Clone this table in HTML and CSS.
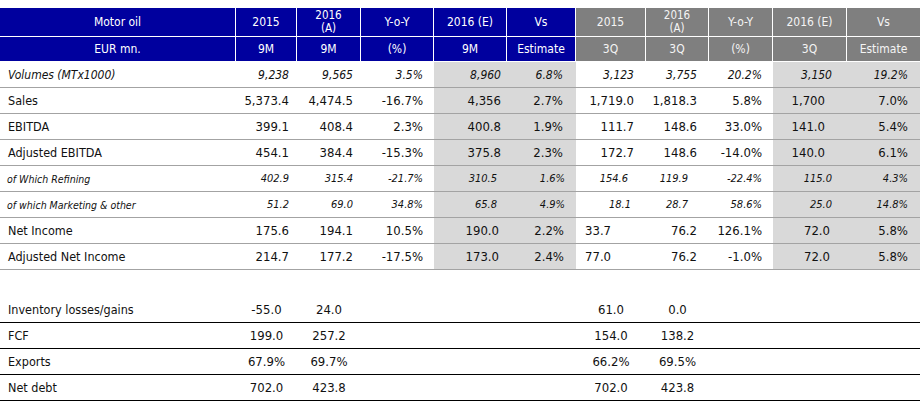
FILE: index.html
```html
<!DOCTYPE html>
<html>
<head>
<meta charset="utf-8">
<link rel="stylesheet" href="styles.css">
</head>
<body>
<table class="grid main">
  <colgroup>
    <col class="w1"><col class="w2"><col class="w3"><col class="w4"><col class="w5"><col class="w6"><col class="w7"><col class="w8"><col class="w9"><col class="w10"><col class="w11">
  </colgroup>
  <thead>
    <tr class="h1">
      <th class="blue">Motor oil</th>
      <th class="blue">2015</th>
      <th class="blue two">2016<br>(A)</th>
      <th class="blue">Y-o-Y</th>
      <th class="blue">2016 (E)</th>
      <th class="blue">Vs</th>
      <th class="grey">2015</th>
      <th class="grey two">2016<br>(A)</th>
      <th class="grey">Y-o-Y</th>
      <th class="grey">2016 (E)</th>
      <th class="grey">Vs</th>
    </tr>
    <tr class="h2">
      <th class="blue">EUR mn.</th>
      <th class="blue">9M</th>
      <th class="blue">9M</th>
      <th class="blue">(%)</th>
      <th class="blue">9M</th>
      <th class="blue">Estimate</th>
      <th class="grey">3Q</th>
      <th class="grey">3Q</th>
      <th class="grey">(%)</th>
      <th class="grey">3Q</th>
      <th class="grey">Estimate</th>
    </tr>
  </thead>
  <tbody class="data">
    <tr class="vol">
      <td>Volumes (MTx1000)</td><td>9,238</td><td>9,565</td><td>3.5%</td><td>8,960</td><td>6.8%</td><td>3,123</td><td>3,755</td><td>20.2%</td><td>3,150</td><td>19.2%</td>
    </tr>
    <tr>
      <td>Sales</td><td>5,373.4</td><td>4,474.5</td><td>-16.7%</td><td>4,356</td><td>2.7%</td><td>1,719.0</td><td>1,818.3</td><td>5.8%</td><td>1,700</td><td>7.0%</td>
    </tr>
    <tr>
      <td>EBITDA</td><td>399.1</td><td>408.4</td><td>2.3%</td><td>400.8</td><td>1.9%</td><td>111.7</td><td>148.6</td><td>33.0%</td><td>141.0</td><td>5.4%</td>
    </tr>
    <tr>
      <td>Adjusted EBITDA</td><td>454.1</td><td>384.4</td><td>-15.3%</td><td>375.8</td><td>2.3%</td><td>172.7</td><td>148.6</td><td>-14.0%</td><td>140.0</td><td>6.1%</td>
    </tr>
    <tr class="sub ref">
      <td>of Which Refining</td><td>402.9</td><td>315.4</td><td>-21.7%</td><td>310.5</td><td>1.6%</td><td>154.6</td><td>119.9</td><td>-22.4%</td><td>115.0</td><td>4.3%</td>
    </tr>
    <tr class="sub mkt">
      <td>of which Marketing &amp; other</td><td>51.2</td><td>69.0</td><td>34.8%</td><td>65.8</td><td>4.9%</td><td>18.1</td><td>28.7</td><td>58.6%</td><td>25.0</td><td>14.8%</td>
    </tr>
    <tr class="ni">
      <td>Net Income</td><td>175.6</td><td>194.1</td><td>10.5%</td><td>190.0</td><td>2.2%</td><td>33.7</td><td>76.2</td><td>126.1%</td><td>72.0</td><td>5.8%</td>
    </tr>
    <tr class="ni">
      <td>Adjusted Net Income</td><td>214.7</td><td>177.2</td><td>-17.5%</td><td>173.0</td><td>2.4%</td><td>77.0</td><td>76.2</td><td>-1.0%</td><td>72.0</td><td>5.8%</td>
    </tr>
  </tbody>
</table>

<table class="grid extra">
  <colgroup>
    <col class="w1"><col class="w2"><col class="w3"><col class="w4"><col class="w5"><col class="w6"><col class="w7"><col class="w8"><col class="w9"><col class="w10"><col class="w11">
  </colgroup>
  <tbody>
    <tr class="first">
      <td>Inventory losses/gains</td><td>-55.0</td><td>24.0</td><td></td><td></td><td></td><td>61.0</td><td>0.0</td><td></td><td></td><td></td>
    </tr>
    <tr>
      <td>FCF</td><td>199.0</td><td>257.2</td><td></td><td></td><td></td><td>154.0</td><td>138.2</td><td></td><td></td><td></td>
    </tr>
    <tr>
      <td>Exports</td><td>67.9%</td><td>69.7%</td><td></td><td></td><td></td><td>66.2%</td><td>69.5%</td><td></td><td></td><td></td>
    </tr>
    <tr>
      <td>Net debt</td><td>702.0</td><td>423.8</td><td></td><td></td><td></td><td>702.0</td><td>423.8</td><td></td><td></td><td></td>
    </tr>
  </tbody>
</table>
</body>
</html>
```

FILE: styles.css
```css
html, body {
  background: #ffffff;
}
body {
  margin: 8px 0 0 0;
  font-family: "DejaVu Sans Condensed", "DejaVu Sans", sans-serif;
  font-stretch: condensed;
  color: #111111;
}

.grid {
  width: 920px;
  table-layout: fixed;
  border-collapse: separate;
  border-spacing: 0;
}
.grid td, .grid th {
  padding: 0;
  white-space: nowrap;
  overflow: hidden;
}

.w1 { width: 236px; }
.w2 { width: 61px; }
.w3 { width: 64px; }
.w4 { width: 73px; }
.w5 { width: 73px; }
.w6 { width: 69px; }
.w7 { width: 70px; }
.w8 { width: 63px; }
.w9 { width: 64px; }
.w10 { width: 74px; }
.w11 { width: 73px; }

/* header */
.main th {
  font-weight: normal;
  font-size: 12px;
  color: #ffffff;
  text-align: center;
  border-right: 1px solid #ffffff;
  border-bottom: 1px solid #ffffff;
}
.main th:last-child { border-right: 0; }
.main .h1 th { height: 28px; }
.main .h2 th { height: 24px; }
.main th.two { line-height: 13px; font-size: 11.5px; }
.main th.blue { background: #00009e; }
.main th.grey { background: #7f7f7f; color: #f4f4f4; }

/* data */
.data td {
  height: 25px;
  font-size: 13px;
  text-align: right;
  border-bottom: 1px solid #a3a3a3;
  vertical-align: middle;
}
.data td:nth-child(1) { text-align: left; padding-left: 8px; font-size: 12.5px; }
.data td:nth-child(2) { padding-right: 8px; }
.data td:nth-child(3) { padding-right: 8px; }
.data td:nth-child(4) { padding-right: 11px; }
.data td:nth-child(5) { padding-right: 6px; background: #d9d9d9; }
.data td:nth-child(6) { padding-right: 13px; background: #d9d9d9; }
.data td:nth-child(7) { padding-right: 12px; }
.data td:nth-child(8) { padding-right: 12px; }
.data td:nth-child(9) { padding-right: 11px; }
.data td:nth-child(10) { padding-right: 22px; background: #d9d9d9; }
.data td:nth-child(11) { padding-right: 12px; background: #d9d9d9; }

.data .vol td { font-style: italic; font-size: 12px; }
.data .vol td:nth-child(10) { padding-right: 15px; }

.data .sub td { font-style: italic; font-size: 11px; }
.data .sub td:nth-child(1) { font-size: 10.5px; padding-left: 7px; }
.data .sub td:nth-child(5) { padding-right: 10px; }
.data .sub td:nth-child(6) { padding-right: 11px; }
.data .sub td:nth-child(8) { padding-right: 21px; }
.data .sub td:nth-child(10) { padding-right: 15px; }
.data .ref td:nth-child(7) { padding-right: 18px; }
.data .mkt td:nth-child(7) { padding-right: 15px; }

.data .ni td:nth-child(5) { padding-right: 8px; }
.data .ni td:nth-child(6) { padding-right: 12px; }
.data .ni td:nth-child(7) { text-align: left; padding-left: 9px; }
.data .ni td:nth-child(10) { padding-right: 17px; }

/* lower block */
.extra { margin-top: 27px; }
.extra td {
  height: 25px;
  font-size: 13px;
  text-align: center;
  border-bottom: 1px solid #000000;
}
.extra td:nth-child(1) { text-align: left; padding-left: 8px; font-size: 12.5px; }
```
